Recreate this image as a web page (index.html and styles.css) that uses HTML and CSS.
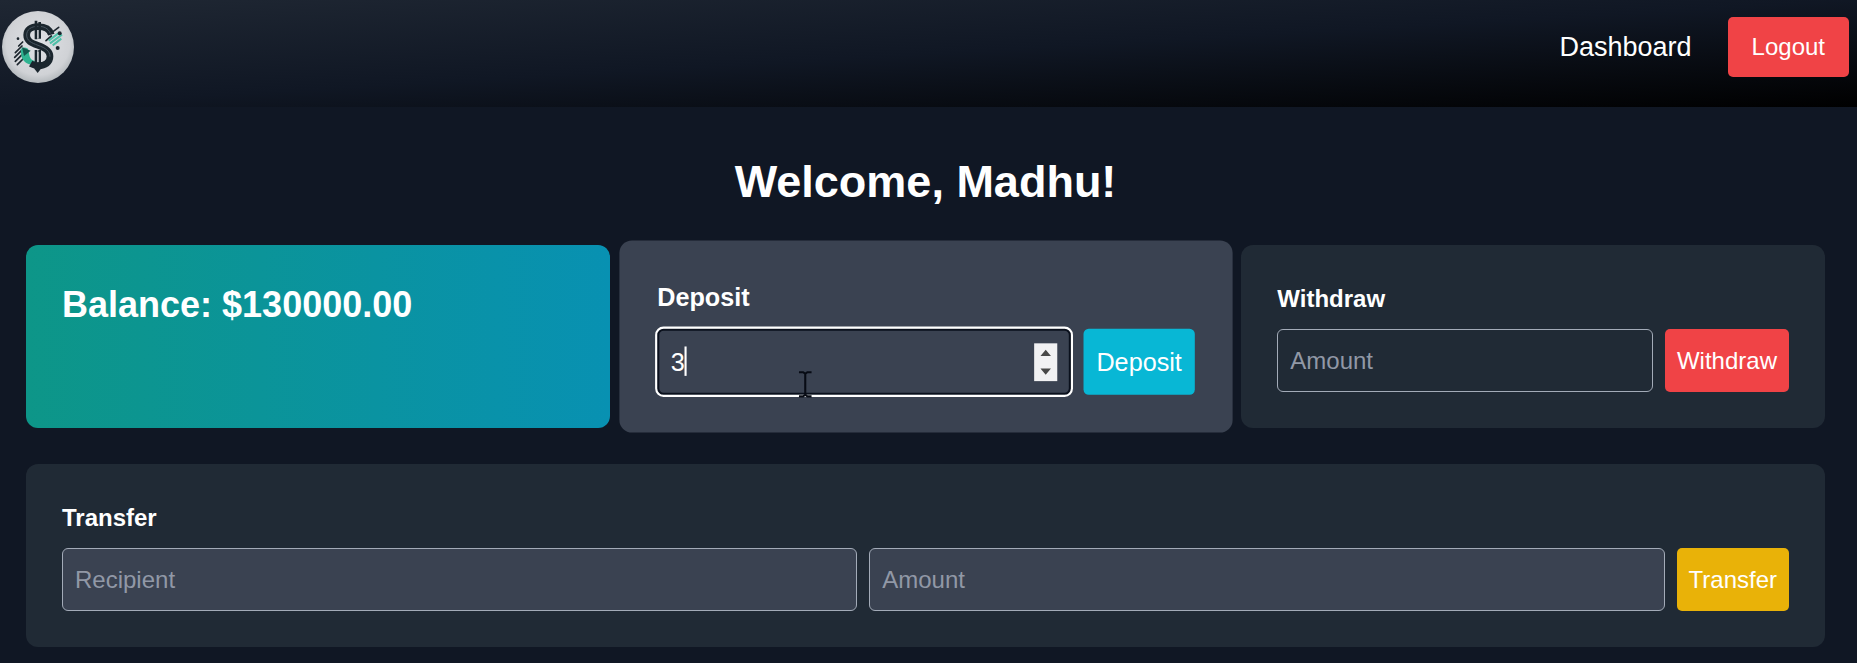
FILE: index.html
```html
<!DOCTYPE html>
<html lang="en">
<head>
  <meta charset="utf-8">
  <meta name="viewport" content="width=device-width, initial-scale=1">
  <title>Dashboard</title>
  <link rel="stylesheet" href="styles.css">
</head>
<body>
  <header class="topbar">
    <a class="logo" href="#" aria-label="Home">
      <svg viewBox="6 33 216 216" aria-hidden="true">
        <defs>
          <radialGradient id="coin" cx="50%" cy="45%" r="55%">
            <stop offset="0" stop-color="#dfe1e5"/>
            <stop offset="0.8" stop-color="#d0d2d6"/>
            <stop offset="1" stop-color="#b4b9bd"/>
          </radialGradient>
        </defs>
        <circle cx="114" cy="141" r="108" fill="url(#coin)"/>
        <g fill="none" stroke="#1c252d" stroke-width="5" stroke-linecap="round">
          <path d="M68 126l-12 12M66 138l-20 20M68 148l-24 24M70 160l-24 24M72 174l-20 20M152 100l24-18M138 122l16-14"/>
        </g>
        <g fill="none" stroke="#4fbfa8" stroke-width="6">
          <path d="M146 122l32-24M150 130l36-26M158 136l26-20"/>
        </g>
        <path d="M62 148c6-8 14-6 22-2l4 20c3 12 8 16 20 18v12c-26 0-40-12-44-28z" fill="#2fb391"/>
        <path d="M66 142l26 10-20 16z" fill="#15594f"/>
        <path d="M154 104C148 84 134 80 114 80c-22 0-34 10-34 25 0 18 14 24 34 31 24 8 36 17 36 33 0 18-14 28-35 28-9 0-16-2-23-6" fill="none" stroke="#1b262e" stroke-width="20"/>
        <path d="M151 100C144 84 132 79 114 79c-21 0-34 10-34 26 0 17 13 23 34 31 23 8 36 17 36 34" fill="none" stroke="#485560" stroke-width="3"/>
        <path d="M108 62v56M119 66v50M108 150v50M119 150v50" fill="none" stroke="#1b262e" stroke-width="8"/>
        <path d="M114 90v24M114 156v30" stroke="#dfe1e5" stroke-width="3"/>
        <path d="M103 198h20v8l-10 13-10-13z" fill="#1b262e"/>
        <g fill="#1b242c">
          <circle cx="179" cy="100" r="6"/>
          <circle cx="173" cy="144" r="6"/>
          <circle cx="54" cy="116" r="4"/>
        </g>
      </svg>
    </a>
    <nav class="nav">
      <a class="nav-link" href="#">Dashboard</a>
      <button class="button button-logout" type="button">Logout</button>
    </nav>
  </header>

  <main class="page">
    <h1 class="welcome">Welcome, Madhu!</h1>

    <div class="cards">
      <section class="card card-balance">
        <h2 class="balance">Balance: $130000.00</h2>
      </section>

      <section class="card card-active">
        <h2 class="card-title" id="deposit-title">Deposit</h2>
        <form class="row">
          <div class="field-wrap">
            <input class="field field-focused" type="number" value="3" aria-labelledby="deposit-title">
            <span class="caret"></span>
            <svg class="pointer" viewBox="0 0 14 26" aria-hidden="true">
              <path d="M1 1.500h4l2 1.500 2-1.500h4M7 3v20M1 24.500h4l2-1.500 2 1.500h4" fill="none" stroke="#070b14" stroke-width="2"/>
            </svg>
          </div>
          <button class="button button-deposit" type="button">Deposit</button>
        </form>
      </section>

      <section class="card">
        <h2 class="card-title" id="withdraw-title">Withdraw</h2>
        <form class="row">
          <input class="field" type="number" placeholder="Amount" aria-labelledby="withdraw-title">
          <button class="button button-withdraw" type="button">Withdraw</button>
        </form>
      </section>
    </div>

    <section class="card">
      <h2 class="card-title">Transfer</h2>
      <form class="row">
        <input class="field field-filled" type="text" placeholder="Recipient" aria-label="Recipient">
        <input class="field field-filled" type="number" placeholder="Amount" aria-label="Transfer amount">
        <button class="button button-transfer" type="button">Transfer</button>
      </form>
    </section>
  </main>
</body>
</html>
```
FILE: styles.css
```css
*,
*::before,
*::after {
  box-sizing: border-box;
}

body {
  margin: 0;
  background: #101724;
  color: #fff;
  font-family: "Liberation Sans", Arial, sans-serif;
  font-size: 24px;
  line-height: 36px;
}

h1,
h2 {
  margin: 0;
}

.topbar {
  display: flex;
  align-items: center;
  justify-content: space-between;
  padding: 11px 8px 24px 2px;
  background: linear-gradient(to bottom right, #1f2733, #101724 50%, #000);
}

.logo,
.logo svg {
  display: block;
  width: 72px;
  height: 72px;
}

.nav {
  display: flex;
  align-items: center;
  gap: 36px;
}

.nav-link {
  color: #fff;
  font-size: 27px;
  text-decoration: none;
}

.button {
  flex: none;
  padding: 12px;
  border: 0;
  border-radius: 5px;
  color: #fff;
  font: inherit;
  cursor: pointer;
}

.button-logout {
  padding: 12px 24px;
  background: #f04346;
}

.button-deposit {
  background: #08b7d5;
}

.button-withdraw {
  background: #f04346;
}

.button-transfer {
  background: #e9b208;
}

.page {
  display: flex;
  flex-direction: column;
  gap: 36px;
  padding: 48px 32px 16px 26px;
}

.welcome {
  font-size: 45px;
  line-height: 54px;
  text-align: center;
}

.cards {
  display: grid;
  grid-template-columns: repeat(3, minmax(0, 1fr));
  gap: 24px;
}

.card {
  padding: 36px;
  border-radius: 12px;
  background: #202a35;
}

.card-balance {
  background: linear-gradient(to right, #0d9688, #0891b2);
}

.card-active {
  background: #3a4251;
  transform: scale(1.05);
}

.balance {
  font-size: 36px;
  line-height: 48px;
}

.card-title {
  margin-bottom: 12px;
  font-size: 24px;
  line-height: 36px;
}

.row {
  display: flex;
  gap: 12px;
}

.field-wrap {
  position: relative;
  display: flex;
  flex: 1;
  min-width: 0;
}

.field {
  flex: 1;
  min-width: 0;
  height: 63px;
  padding: 0 12px;
  border: 1px solid #a3abb8;
  border-radius: 6px;
  outline: 0;
  background: transparent;
  color: #fff;
  font: inherit;
}

.field::placeholder {
  color: #9198a6;
  opacity: 1;
}

.field-filled {
  background: #3a4251;
}

.field-focused {
  padding: 0 11px;
  border: 2px solid #0a101c;
  outline: 2px solid #fff;
}

.field::-webkit-inner-spin-button {
  appearance: none;
  width: 22px;
  height: 36px;
  margin: 0;
  opacity: 0;
}

.field-focused::-webkit-inner-spin-button {
  background: #f1f1f3 url("data:image/svg+xml,%3Csvg xmlns='http://www.w3.org/2000/svg' viewBox='0 0 22 36'%3E%3Cpath d='M6 12l5-6 5 6zM6 24h10l-5 6z' fill='%23484848'/%3E%3C/svg%3E") center / 100% 100%;
  opacity: 1;
}

.caret {
  position: absolute;
  top: 17px;
  left: 26px;
  width: 2px;
  height: 28px;
  background: #fff;
}

.pointer {
  position: absolute;
  top: 40px;
  left: 34%;
  width: 14px;
  height: 26px;
}
```
